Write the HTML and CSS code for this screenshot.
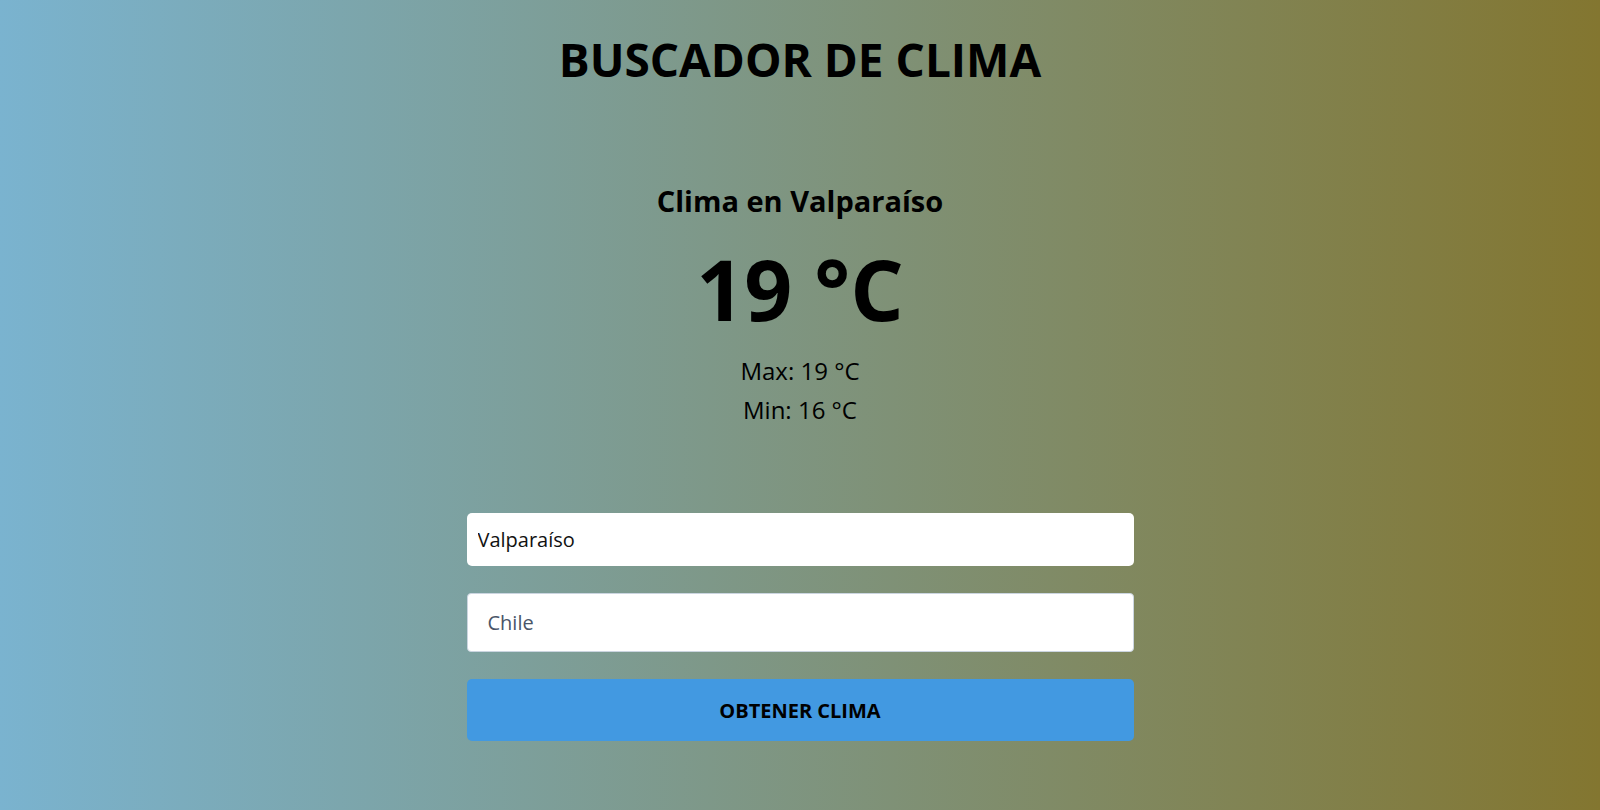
FILE: index.html
```html
<!DOCTYPE html>
<html lang="es">
<head>
<meta charset="utf-8">
<title>Buscador de clima</title>
<link rel="stylesheet" href="styles.css">
</head>
<body>
<main class="page">
  <h1 class="title">BUSCADOR DE CLIMA</h1>
  <section class="weather">
    <h2 class="city">Clima en Valparaíso</h2>
    <p class="temp">19 °C</p>
    <p class="range">Max: 19 °C</p>
    <p class="range">Min: 16 °C</p>
  </section>
  <form class="search">
    <input class="field field-city" type="text" value="Valparaíso">
    <input class="field field-country" type="text" value="Chile">
    <button class="submit" type="button">OBTENER CLIMA</button>
  </form>
</main>
</body>
</html>
```
FILE: styles.css
```css
html, body {
  margin: 0;
  padding: 0;
  height: 100%;
}
body {
  background: linear-gradient(to right, #7ab3cf 0%, #837630 100%);
  font-family: "Open Sans", "Noto Sans", sans-serif;
  color: #000;
  overflow: hidden;
}
.page {
  display: flex;
  flex-direction: column;
  align-items: center;
}
.title {
  margin: 31px 0 0;
  font-size: 46px;
  line-height: 56px;
  font-weight: 700;
}
.weather {
  display: flex;
  flex-direction: column;
  align-items: center;
  margin-top: 96px;
}
.city {
  margin: 0;
  font-size: 29px;
  line-height: 36px;
  font-weight: 700;
}
.temp {
  margin: 20px 0 12px;
  font-size: 84px;
  line-height: 100px;
  font-weight: 700;
}
.range {
  margin: 0;
  font-size: 24px;
  line-height: 39px;
  font-weight: 400;
}
.search {
  margin-top: 84px;
  width: 667px;
  display: flex;
  flex-direction: column;
  gap: 27px;
}
.field {
  box-sizing: border-box;
  width: 100%;
  font-family: inherit;
  font-size: 20px;
  background: #fff;
  outline: none;
}
.field-city {
  height: 53px;
  border: none;
  border-radius: 5px;
  padding: 0 11px;
  color: #111;
}
.field-country {
  height: 59px;
  border: 1px solid #cbd5e0;
  border-radius: 4px;
  padding: 0 20px;
  color: #4a5568;
}
.submit {
  height: 62px;
  border: none;
  border-radius: 5px;
  background: #4299e1;
  color: #000;
  font-family: inherit;
  font-size: 20px;
  font-weight: 700;
}
```
